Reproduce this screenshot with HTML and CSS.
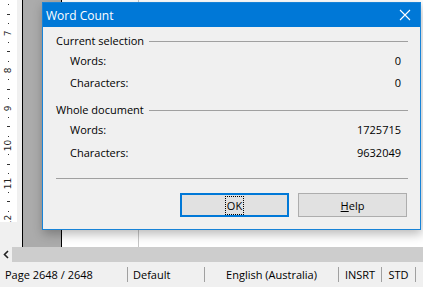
FILE: index.html
```html
<!DOCTYPE html>
<html>
<head>
    <meta charset="utf-8">
    <title>Word Count</title>
    <link rel="stylesheet" href="styles.css">
</head>
<body>
<div class="workspace">
    <!-- vertical ruler -->
    <div class="ruler-col">
        <div class="ruler">
            <span class="mark"><i class="dot"></i></span>
            <span class="mark"><i class="dash"></i></span>
            <span class="mark"><i class="dot"></i></span>
            <span class="mark"><b class="num">7</b></span>
            <span class="mark"><i class="dot"></i></span>
            <span class="mark"><i class="dash"></i></span>
            <span class="mark"><i class="dot"></i></span>
            <span class="mark"><b class="num">8</b></span>
            <span class="mark"><i class="dot"></i></span>
            <span class="mark"><i class="dash"></i></span>
            <span class="mark"><i class="dot"></i></span>
            <span class="mark"><b class="num">9</b></span>
            <span class="mark"><i class="dot"></i></span>
            <span class="mark"><i class="dash"></i></span>
            <span class="mark"><i class="dot"></i></span>
            <span class="mark"><b class="num">10</b></span>
            <span class="mark"><i class="dot"></i></span>
            <span class="mark"><i class="dash"></i></span>
            <span class="mark"><i class="dot"></i></span>
            <span class="mark"><b class="num">11</b></span>
            <span class="mark"><i class="dot"></i></span>
            <span class="mark"><i class="dash"></i></span>
            <span class="mark"><i class="dot"></i></span>
            <span class="mark"><b class="num">12</b></span>
        </div>
    </div>
    <div class="doc-area">
        <div class="page">
            <div class="margin-line"></div>
        </div>
    </div>

    <!-- Word Count dialog -->
    <div class="dialog">
        <div class="titlebar">
            <span class="title">Word Count</span>
            <svg class="close" width="12" height="12" viewBox="0 0 12 12">
                <path d="M1 1 L11 11 M11 1 L1 11" stroke="#fff" stroke-width="1.1" fill="none"/>
            </svg>
        </div>
        <div class="dialog-body">
            <div class="frame-label first"><span>Current selection</span><div class="rule"></div></div>
            <div class="row words"><span>Words:</span><span>0</span></div>
            <div class="row chars"><span>Characters:</span><span>0</span></div>
            <div class="frame-label second"><span>Whole document</span><div class="rule"></div></div>
            <div class="row words"><span>Words:</span><span>1725715</span></div>
            <div class="row chars2"><span>Characters:</span><span>9632049</span></div>
            <div class="separator"></div>
            <div class="buttons">
                <button class="btn btn-default"><span class="focus">OK</span></button>
                <button class="btn"><u>H</u>elp</button>
            </div>
        </div>
    </div>
</div>

<div class="hscroll">
    <div class="scroll-left">
        <svg width="6" height="9" viewBox="0 0 6 9">
            <path d="M5 1 L1.5 4.5 L5 8" stroke="#222" stroke-width="1.6" fill="none"/>
        </svg>
    </div>
    <div class="scroll-track"></div>
</div>

<div class="statusbar">
    <div class="field f-page">Page 2648 / 2648</div>
    <div class="field f-style">Default</div>
    <div class="field f-lang">English (Australia)</div>
    <div class="field f-mode">INSRT</div>
    <div class="field f-sel">STD</div>
</div>
</body>
</html>
```

FILE: styles.css
```css
body {
    margin: 0;
    width: 423px;
    height: 287px;
    overflow: hidden;
    background-color: #f0f0f0;
    font-family: 'Open Sans', 'Noto Sans', sans-serif;
    font-size: 11px;
    color: #000;
}

/* 作業領域 */
.workspace {
    position: relative;
    display: flex;
    height: 247px;
}
.ruler-col {
    width: 17px;
    margin-right: 5px;
}
.ruler {
    display: flex;
    flex-direction: column;
    height: 222px;
    padding-top: 0.3px;
    box-sizing: border-box;
    overflow: hidden;
    background-color: #fff;
}
.mark {
    flex: none;
    height: 9.375px;
    display: flex;
    align-items: center;
    justify-content: center;
}
.dot {
    width: 1px;
    height: 1px;
    background-color: #333;
}
.dash {
    width: 3px;
    height: 1px;
    background-color: #333;
}
.num {
    display: inline-block;
    font-family: 'DejaVu Sans', sans-serif;
    font-weight: normal;
    font-size: 9px;
    line-height: 9px;
    transform: rotate(-90deg);
    color: #222;
}
.doc-area {
    flex: 1;
    display: flex;
    border-left: 1px solid #000;
    background-color: #ababab;
    padding-left: 38px;
}
.page {
    flex: 1;
    border-left: 1px solid #000;
    background-color: #fff;
}
.margin-line {
    width: 1px;
    height: 100%;
    margin-left: 76px;
    background-color: #c6c6c6;
}

/* ダイアログ */
.dialog {
    position: absolute;
    left: 42px;
    top: 2px;
    width: 379px;
    height: 228px;
    box-sizing: border-box;
    border: 1px solid #1883d7;
    background-color: #f0f0f0;
    box-shadow: 1px 4px 10px rgba(0, 0, 0, 0.28);
}
.titlebar {
    display: flex;
    align-items: center;
    justify-content: space-between;
    height: 24px;
    padding: 0 9px 0 3px;
    background-color: #0078d7;
    color: #fff;
    font-size: 12px;
}
.close {
    display: block;
}
.dialog-body {
    padding: 6px 12px 0 13px;
}
.frame-label {
    display: flex;
    align-items: center;
    height: 16px;
    line-height: 16px;
}
.frame-label .rule {
    flex: 1;
    height: 1px;
    margin-left: 5px;
    background-color: #a0a0a0;
}
.frame-label.second {
    margin-top: 11px;
}
.row {
    display: flex;
    justify-content: space-between;
    height: 16px;
    line-height: 16px;
    padding: 0 7px 0 14px;
}
.row.words {
    margin-top: 4px;
}
.row.chars {
    margin-top: 6px;
}
.row.chars2 {
    margin-top: 7px;
}
.separator {
    height: 1px;
    margin-top: 17px;
    background-color: #a0a0a0;
}
.buttons {
    display: flex;
    justify-content: flex-end;
    gap: 9px;
    margin-top: 14px;
    padding-right: 1px;
}
.btn {
    width: 109px;
    height: 24px;
    box-sizing: border-box;
    border: 1px solid #adadad;
    background-color: #e1e1e1;
    font-family: inherit;
    font-size: 11px;
    color: #000;
    padding: 0;
}
.btn-default {
    border: 2px solid #0078d7;
}
.focus {
    padding: 1px 1px;
    outline: 1px dotted #000;
}

/* 横スクロールバー */
.hscroll {
    display: flex;
    height: 15px;
}
.scroll-left {
    width: 12px;
    display: flex;
    align-items: center;
    justify-content: center;
}
.scroll-left svg {
    display: block;
}
.scroll-track {
    flex: 1;
    background-color: #cdcdcd;
}

/* ステータスバー */
.statusbar {
    display: flex;
    align-items: center;
    height: 25px;
}
.field {
    height: 15px;
    line-height: 15px;
    box-sizing: border-box;
    border-right: 1px solid #a0a0a0;
    white-space: nowrap;
    font-size: 11px;
}
.f-page {
    width: 128px;
    padding-left: 5px;
}
.f-style {
    width: 77px;
    padding-left: 5px;
}
.f-lang {
    width: 134px;
    text-align: center;
}
.f-mode {
    width: 43px;
    text-align: center;
}
.f-sel {
    width: 34px;
    text-align: center;
}
```
